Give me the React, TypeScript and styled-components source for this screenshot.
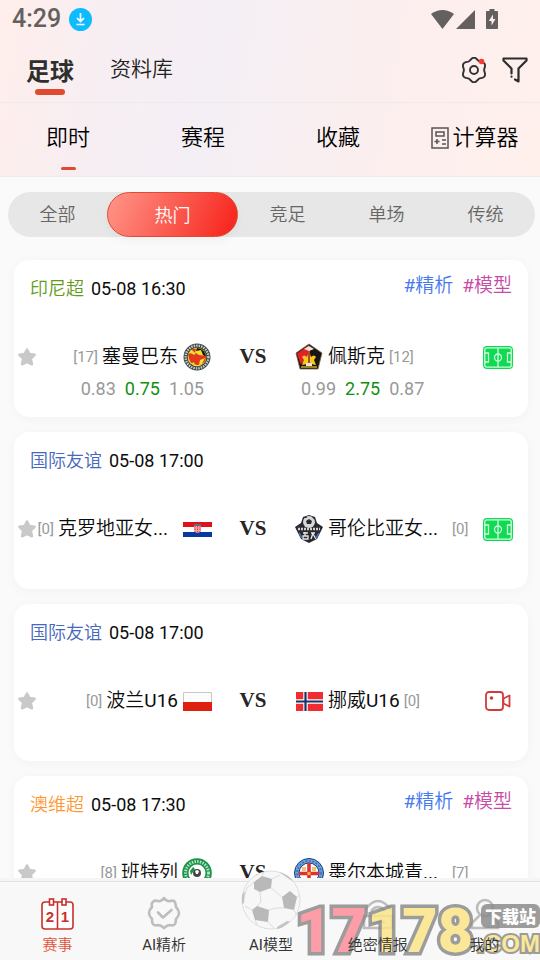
import React from "react";
import styled, { createGlobalStyle, css } from "styled-components";

const Global = createGlobalStyle`
  * { box-sizing: border-box; }
  body {
    margin: 0;
    background: #fafafa;
    color: #0c0c0c;
    font-family: Roboto, "Noto Sans CJK SC DemiLight", "Noto Sans CJK SC Light", "Noto Sans CJK SC", sans-serif;
  }
  button {
    margin: 0;
    padding: 0;
    border: 0;
    background: none;
    color: inherit;
    font: inherit;
    cursor: pointer;
  }
  a { color: inherit; text-decoration: none; }
  svg { display: block; flex: none; }
`;

/* ---------- page frame ---------- */

const Screen = styled.div`
  display: flex;
  flex-direction: column;
  height: 100vh;
  overflow: hidden;
`;

const Header = styled.header`
  flex: none;
  background: linear-gradient(100deg, #ffeeeb 0%, #f6eef3 22%, #f4eff5 40%, #fbeeee 68%, #fff0ec 100%);
  border-bottom: 1px solid #ebebee;
`;

const StatusBar = styled.div`
  display: flex;
  align-items: center;
  justify-content: space-between;
  height: 38px;
  padding: 0 42px 0 12px;
  color: #646060;
`;

const StatusGroup = styled.div<{ $gap: number }>`
  display: flex;
  align-items: center;
  gap: ${(p) => p.$gap}px;
`;

const Clock = styled.time`
  font-size: 25px;
  font-weight: 500;
  line-height: 36px;
`;

const TitleBar = styled.div`
  display: flex;
  align-items: center;
  justify-content: space-between;
  height: 65px;
  padding: 0 12px 0 26px;
  border-bottom: 1px solid #ebebee;
`;

const TitleTabs = styled.div`
  display: flex;
  align-items: flex-start;
  gap: 36px;
  padding-top: 8px;
`;

const TitleTab = styled.button<{ $active?: boolean }>`
  display: flex;
  flex-direction: column;
  align-items: center;
  gap: 2px;
  font-size: 21px;
  line-height: 30px;
  color: #222;
  ${(p) =>
    p.$active &&
    css`
      padding-top: 3px;
      font-family: Roboto, "Noto Sans CJK SC", sans-serif;
      font-size: 24px;
      font-weight: 700;
      color: #2f2f2f;
    `}
`;

const Underline = styled.span<{ $w: number; $h: number }>`
  width: ${(p) => p.$w}px;
  height: ${(p) => p.$h}px;
  border-radius: 3px;
  background: #df4a30;
`;

const Tools = styled.div`
  display: flex;
  align-items: center;
  gap: 15px;
`;

const ViewTabs = styled.nav`
  display: grid;
  grid-template-columns: repeat(4, 1fr);
  height: 73px;
`;

const ViewTab = styled.button`
  display: flex;
  flex-direction: column;
  align-items: center;
  padding: 19px 0 0 1px;
  gap: 13px;
  font-size: 22px;
  line-height: 32px;
  color: #000;
`;

const TabLabel = styled.span<{ $icon?: boolean }>`
  display: flex;
  align-items: center;
  gap: 3px;
  padding-left: ${(p) => (p.$icon ? "4px" : "0")};
`;

const Main = styled.main`
  flex: 1;
  min-height: 0;
  overflow-y: auto;
  scrollbar-width: none;
  padding-top: 15px;
`;

/* ---------- filter ---------- */

const Segments = styled.div`
  display: flex;
  height: 45px;
  margin: 0 5px 23px 8px;
  border-radius: 23px;
  background: #e7e7e7;
`;

const Segment = styled.button<{ $active?: boolean }>`
  flex: 99 1 0;
  padding-bottom: 3px;
  font-size: 18px;
  color: #666;
  ${(p) =>
    p.$active &&
    css`
      flex-grow: 129;
      padding-bottom: 2px;
      border: 1px solid #de4b33;
      border-radius: 23px;
      color: #fff;
      background: linear-gradient(115deg, #ff9184 5%, #f72a22 92%);
      box-shadow: 0 4px 10px rgba(0, 0, 0, 0.04);
    `}
`;

/* ---------- match cards ---------- */

const CardList = styled.div`
  display: flex;
  flex-direction: column;
  gap: 15px;
  padding: 0 12px 15px 14px;
`;

const Card = styled.article`
  padding: 16px 15px 16px 4px;
  border-radius: 15px;
  background: #fff;
  box-shadow: 0 2px 12px rgba(0, 0, 0, 0.035);
`;

const CardHead = styled.div`
  display: flex;
  align-items: flex-start;
  justify-content: space-between;
  height: 65px;
  padding-left: 12px;
  font-size: 18px;
  line-height: 26px;
`;

const Fixture = styled.div`
  display: flex;
  gap: 7px;
`;

const League = styled.span<{ $color: string }>`
  color: ${(p) => p.$color};
`;

const Tags = styled.div`
  display: flex;
  gap: 9px;
  padding-right: 1px;
  font-size: 19px;
  line-height: 20px;
`;

const Tag = styled.a<{ $color: string }>`
  color: ${(p) => p.$color};
`;

const Board = styled.div`
  display: grid;
  grid-template-columns: 19px minmax(0, 1fr) 82px minmax(0, 1fr) 44px;
  grid-template-rows: 32px 24px;
  row-gap: 4px;
  align-items: center;
`;

const Team = styled.div<{ $home?: boolean }>`
  display: flex;
  align-items: center;
  justify-content: ${(p) => (p.$home ? "flex-end" : "flex-start")};
  gap: 4px;
`;

const TeamName = styled.span<{ $wide?: boolean }>`
  font-size: 19px;
  line-height: 30px;
  white-space: nowrap;
  min-width: ${(p) => (p.$wide ? "120px" : "0")};
`;

const Crest = styled.span`
  display: flex;
  justify-content: center;
  width: 30px;
`;

const Rank = styled.span`
  font-size: 15px;
  line-height: 30px;
  color: #999;
`;

const Versus = styled.span`
  text-align: center;
  font-family: "Liberation Serif", serif;
  font-size: 21px;
  font-weight: 700;
  line-height: 24px;
  padding-bottom: 2px;
  color: #262626;
`;

const StarButton = styled.button`
  display: flex;
  justify-content: flex-start;
`;

const MediaButton = styled.button`
  display: flex;
  justify-content: flex-end;
`;

const Odds = styled.div<{ $home?: boolean }>`
  grid-row: 2;
  grid-column: ${(p) => (p.$home ? 2 : 4)};
  display: flex;
  justify-content: ${(p) => (p.$home ? "flex-end" : "flex-start")};
  gap: 9px;
  padding: ${(p) => (p.$home ? "0 8px 0 0" : "0 0 0 7px")};
  font-size: 18px;
  line-height: 24px;
  color: #999;
`;

const Line = styled.span`
  color: #109010;
`;

/* ---------- bottom bar ---------- */

const BottomBar = styled.nav`
  position: relative;
  flex: none;
  padding-top: 3px;
  background: #f5f5f5;
`;

const BottomItems = styled.div`
  display: grid;
  grid-template-columns: repeat(5, 1fr);
  height: 79px;
  padding: 0 2px 0 4px;
  border-top: 1px solid #e2e2e2;
  background: #f8f8f8;
`;

const BottomItem = styled.a<{ $active?: boolean }>`
  display: flex;
  flex-direction: column;
  align-items: center;
  justify-content: flex-end;
  padding-bottom: 5px;
  font-size: 15px;
  line-height: 20px;
  color: ${(p) => (p.$active ? "#e0523a" : "#333")};
`;

const ItemLabel = styled.span`
  position: relative;
  z-index: 2;
`;

const ItemIcon = styled.span`
  display: flex;
  flex-direction: column;
  justify-content: flex-end;
  height: 36px;
  margin-bottom: 5px;
`;

const Brand = styled.div`
  position: absolute;
  right: 0;
  bottom: 0;
  z-index: 1;
  display: flex;
  align-items: flex-end;
  opacity: 0.85;
  font-family: Roboto, sans-serif;
  font-weight: 900;
  -webkit-text-stroke: 7px #8c8c8c;
  paint-order: stroke fill;
  color: #fbe688;
`;

const BrandNumber = styled.span`
  font-size: 61px;
  line-height: 58px;
`;

const BrandRed = styled.span`
  color: #fd8e99;
`;

const BrandSide = styled.span`
  display: flex;
  flex-direction: column;
  align-items: flex-end;
  width: 67px;
`;

const BrandBadge = styled.span`
  padding: 0 4px;
  border-radius: 6px;
  background: #8c8c8c;
  color: #fff;
  font-family: "Noto Sans CJK SC", sans-serif;
  font-size: 17px;
  line-height: 24px;
  -webkit-text-stroke: 0;
`;

const BrandDomain = styled.span`
  font-family: "Liberation Sans", sans-serif;
  font-size: 24px;
  line-height: 32px;
  -webkit-text-stroke: 4px #8c8c8c;
`;

/* ---------- icons ---------- */

const DownloadIcon = () => (
  <svg width="23" height="23" viewBox="0 0 23 23">
    <circle cx="11.500" cy="11.500" r="11.500" fill="#0cbcff" />
    <path d="M11.500 5v8M8 10l3.500 3.500L15 10M7.500 16.500h8" fill="none" stroke="#fff" strokeWidth="1.700" />
  </svg>
);

const WifiIcon = () => (
  <svg width="23" height="19" viewBox="0 0 23 19">
    <path d="M0 4Q11.500-4 23 4L11.500 19Z" fill="currentColor" />
  </svg>
);

const SignalIcon = () => (
  <svg width="19" height="19" viewBox="0 0 19 19">
    <path d="M19 0v19H0Z" fill="currentColor" />
  </svg>
);

const BatteryIcon = () => (
  <svg width="12" height="20" viewBox="0 0 12 20">
    <path d="M3.500 0h5v2H11q1 0 1 1v16q0 1-1 1H1q-1 0-1-1V3q0-1 1-1h2.500Z" fill="currentColor" />
    <path d="M7 5.500 2.800 12H5.500v4.500L9.500 10H7Z" fill="#fceeee" />
  </svg>
);

const gearOutline = Array.from({ length: 72 }, (_, i) => {
  const a = (i * Math.PI) / 36;
  const r = 11.2 + 1.1 * Math.cos(6 * a);
  return `${i ? "L" : "M"}${(13 + r * Math.sin(a)).toFixed(2)} ${(13 - r * Math.cos(a)).toFixed(2)}`;
}).join("") + "Z";

const GearIcon = () => (
  <svg width="26" height="26" viewBox="0 0 26 26" fill="none" stroke="#333" strokeWidth="1.900">
    <path d={gearOutline} strokeLinejoin="round" />
    <circle cx="13" cy="13" r="4" />
    <circle cx="20.500" cy="4.500" r="2.800" fill="#fb3a30" stroke="none" />
  </svg>
);

const FilterIcon = () => (
  <svg width="26" height="26" viewBox="0 0 26 26" fill="none" stroke="#2c2c2c" strokeWidth="2.200" strokeLinejoin="round" strokeLinecap="round">
    <path d="M9.500 16.500V11.500L1.500 3.500V1.500H24.500V3.500L16.500 11.500V24.500L13 22.500" />
    <path d="M9.500 19.500v.2" />
  </svg>
);

const CalculatorIcon = () => (
  <svg width="18" height="22" viewBox="0 0 18 22" fill="none" stroke="#555" strokeWidth="1.500">
    <rect x="1" y="1" width="16" height="20" />
    <path d="M5 5h8v4H5ZM3.500 14.500h5M6 12v5M11 13h4M11 17h4" />
  </svg>
);

const StarIcon = () => (
  <svg width="18" height="18" viewBox="0 0 18 18">
    <path
      d="M9 1.500 11.300 6.100 16.500 6.800 12.800 10.700 13.900 16.200 9 13.900 4.100 16.200 5.200 10.700 1.500 6.800 6.700 6.100Z"
      fill="#c9c9c9"
      stroke="#c9c9c9"
      strokeWidth="2.600"
      strokeLinejoin="round"
    />
  </svg>
);

const PitchIcon = () => (
  <svg width="30" height="23" viewBox="0 0 30 23">
    <rect width="30" height="23" rx="4" fill="#0edb52" />
    <g fill="none" stroke="#d4fadf" strokeWidth="1.300">
      <rect x="1.800" y="1.800" width="26.400" height="19.400" rx="2" />
      <path d="M15 2v19M2 7h3.500v9H2M28 7h-3.500v9h3.500" />
      <circle cx="15" cy="11.500" r="3.500" />
    </g>
  </svg>
);

const VideoIcon = () => (
  <svg width="28" height="20" viewBox="0 0 28 20" fill="none" stroke="#d23a3c" strokeWidth="1.800">
    <rect x="1" y="1" width="17" height="18" rx="3" />
    <path d="M18.500 7.500 24.500 4.500V15.500L18.500 12.500Z" strokeLinejoin="round" />
    <circle cx="6.500" cy="7" r="1.800" fill="#d23a3c" stroke="none" />
  </svg>
);

const PadangCrest = () => (
  <svg width="28" height="28" viewBox="0 0 28 28">
    <circle cx="14" cy="14" r="13.500" fill="#3a4642" />
    <circle cx="14" cy="14" r="11.400" fill="none" stroke="#c6cbc8" strokeWidth="2.400" strokeDasharray="1.500 1" />
    <circle cx="14" cy="14" r="9.300" fill="#f2df30" />
    <path d="M14 5a9 9 0 0 1 9 9l-3-2-2-5-5 1Z" fill="#15120c" />
    <path d="M5 11q3-2 6 1l2-2 3 2 7 1q0 6-4 8-5 2-9 0-4-2-5-10Z" fill="#e2381f" />
    <path d="M8 6l4 4 1-4Z" fill="#e2381f" />
    <path d="M17 17l5-2-3 6-3 1ZM10 19l3 3-4-1Z" fill="#f2df30" />
  </svg>
);

const PersikCrest = () => (
  <svg width="28" height="28" viewBox="0 0 28 28">
    <path d="M14 1 27 10 23 26H5L1 10Z" fill="#1a1514" stroke="#776a3c" strokeWidth=".8" />
    <path d="M14 2 2 10.500 5.500 21 14 18Z" fill="#e3202a" />
    <path d="M7 14q2-3 5 0L14 8l2 6q3-3 5 0l-2 3 2 5-5-1h-4l-5 1 2-5Z" fill="#f5c91c" />
    <path d="M13 5h2v15h-2Z" fill="#b24b22" />
    <path d="M9 6 14 3 19 6 14 8Z" fill="#efe7e0" />
    <path d="M6 23h16v2H6Z" fill="#9a8520" />
    <path d="M11 20h6v3h-6Z" fill="#ece5df" />
  </svg>
);

const CroatiaFlag = () => (
  <svg width="29" height="15" viewBox="0 0 29 15">
    <path d="M0 0h29v5H0Z" fill="#dc1419" />
    <path d="M0 5h29v5H0Z" fill="#fff" />
    <path d="M0 10h29v5H0Z" fill="#073a9f" />
    <path d="M11 4h7v5q-3.500 4-7 0Z" fill="#f4a3a5" />
    <path d="M12 4v6M14.500 4v7M17 4v6" stroke="#e23b45" strokeDasharray="1.500 1" />
    <path d="M11 3h7" stroke="#4284a9" strokeWidth="1.500" />
  </svg>
);

const GuestCrest = () => (
  <svg width="28" height="28" viewBox="0 0 28 28">
    <path d="M14 0 20 2 22 8 28 12 25 18 22 24 14 28 6 24 3 18 0 12 6 8 8 2Z" fill="#292a31" />
    <circle cx="14" cy="7" r="6" fill="#d9d6d5" />
    <path d="m14 4 3 2-1 3h-4l-1-3ZM9 3l2-2 1 2ZM17 2l2 0 1 3Z" fill="#292a31" />
    <path d="M3 14h22" stroke="#d7cdca" strokeWidth="2.500" strokeDasharray="2 1" />
    <path d="M8 18h5M8 21h5v3H8ZM10 17v4M16 18h4M18 18l-2 6M18 19l3 5" fill="none" stroke="#ebe8e8" strokeWidth="1.300" />
    <path d="M4 18l3 5M24 18l-3 5" stroke="#3e6db4" strokeWidth="1.600" />
  </svg>
);

const PolandFlag = () => (
  <svg width="29" height="19" viewBox="0 0 29 19">
    <path d="M.5.5h28v18H.5Z" fill="#fcfcfc" stroke="#c8c8c8" />
    <path d="M0 10h29v9H0Z" fill="#df1f10" />
  </svg>
);

const NorwayFlag = () => (
  <svg width="27" height="19" viewBox="0 0 27 19">
    <path d="M0 0h27v19H0Z" fill="#f02c31" />
    <path d="M9.500 0v19M0 9.500h27" stroke="#fff" strokeWidth="4.500" />
    <path d="M9.500 0v19M0 9.500h27" stroke="#123469" strokeWidth="2.200" />
  </svg>
);

const BentleighCrest = () => (
  <svg width="30" height="30" viewBox="0 0 30 30">
    <circle cx="15" cy="15" r="14.800" fill="#189447" />
    <circle cx="15" cy="15" r="11.500" fill="none" stroke="#b8dec6" strokeWidth="3" strokeDasharray="1.500 1.200" />
    <circle cx="15" cy="15" r="8.500" fill="#fff" />
    <circle cx="15" cy="15" r="4" fill="#444" />
    <path d="M13 13l2-1 2 1-1 3h-2Z" fill="#fff" />
    <path d="M8 13 11 9 13 11 9 17Z" fill="#189447" />
  </svg>
);

const MelbourneCrest = () => (
  <svg width="30" height="30" viewBox="0 0 30 30">
    <circle cx="15" cy="15" r="14.500" fill="#6ea4dd" stroke="#173b7a" />
    <circle cx="15" cy="15" r="12" fill="none" stroke="#3d6bab" strokeWidth="1.500" strokeDasharray="2 1.500" />
    <circle cx="15" cy="15" r="10" fill="#fff" stroke="#173b7a" />
    <path d="M15 5v20M5 15.500h20" stroke="#e13030" strokeWidth="3.600" />
    <path d="M8 9h4v4H8ZM18 9h4v4h-4Z" fill="#efc278" />
    <circle cx="15" cy="15.500" r="1.800" fill="#f8ba36" />
  </svg>
);

const ScoreIcon = () => (
  <svg width="33" height="32" viewBox="0 0 33 32" fill="none" stroke="#c7302c" strokeWidth="1.600">
    <rect x="1" y="4" width="31" height="27" rx="3" fill="#fff" />
    <path d="M16.500 4v27" />
    <rect x="8.500" y="1" width="4" height="6" fill="#fff" />
    <rect x="21" y="1" width="4" height="6" fill="#fff" />
    <g fill="#c7302c" stroke="none" fontFamily="Liberation Sans, sans-serif" fontSize="15" fontWeight="700" textAnchor="middle">
      <text x="9" y="24">2</text>
      <text x="24" y="24">1</text>
    </g>
  </svg>
);

const VerifiedIcon = () => (
  <svg width="34" height="34" viewBox="0 0 34 34" fill="none" stroke="#bdbdbd" strokeWidth="2.600" strokeLinejoin="round">
    <path d="M17 2Q20 6 23 5 27 4 28 6 29 10 29 11 32 14 32 17 32 20 29 23 29 26 28 28 27 30 23 29 20 29 17 32 14 29 11 29 7 30 6 28 5 27 5 23 2 20 2 17 2 14 5 11 4 7 6 6 7 4 11 5 14 6 17 2Z" />
    <path d="m11 16.500 5 5L24.500 14" strokeLinecap="round" />
  </svg>
);

const BallIcon = () => (
  <svg width="60" height="60" viewBox="0 0 60 60">
    <circle cx="30" cy="30" r="29" fill="#f7f7f7" stroke="#dedede" />
    <g fill="none" stroke="#dcdcdc">
      <path d="M19 22 20 32 16 36M30 18 41 27M28 40 35 38 43 38M13 12 6 18 2 30M11 40 4 36M14 50 16 55M27 52 33 58M53 40 56 45M56 27 59 25M31 9 39 5M21 6 23 2" />
    </g>
    <path d="m13 12 8-6 10 3-1 9-11 4-6-3ZM41 27l8-6 7 6-3 13-10-2ZM11 40l5-4 12 4-1 12-13-2Z" fill="#b9b9b9" />
    <path d="M1 25 4 21 3 33 1 34ZM36 57 46 51 49 51Q43 58 36 59ZM38 2Q47 4 53 12L48 9Z" fill="#c4c4c4" />
  </svg>
);

const SecretIcon = () => (
  <svg width="32" height="32" viewBox="0 0 32 32" fill="none" stroke="#bdbdbd" strokeWidth="2.600">
    <path d="M3 12Q16-6 29 12M9 13q7-8 14 0M2 18h28v12H2ZM9 24h14" />
  </svg>
);

const PersonIcon = () => (
  <svg width="32" height="32" viewBox="0 0 32 32" fill="none" stroke="#bdbdbd" strokeWidth="2.600">
    <circle cx="16" cy="10" r="8" />
    <path d="M11 17 3 25v5h26v-5l-8-8" />
  </svg>
);

/* ---------- data ---------- */

type Side = { name: string; rank: string; crest: React.ReactNode; wide?: boolean; odds?: [string, string, string] };
type Match = {
  league: string;
  color: string;
  time: string;
  tagged?: boolean;
  home: Side;
  away: Side;
  media?: "pitch" | "video";
};

const matches: Match[] = [
  {
    league: "印尼超",
    color: "#649b16",
    time: "05-08 16:30",
    tagged: true,
    home: { name: "塞曼巴东", rank: "[17]", crest: <PadangCrest />, odds: ["0.83", "0.75", "1.05"] },
    away: { name: "佩斯克", rank: "[12]", crest: <PersikCrest />, odds: ["0.99", "2.75", "0.87"] },
    media: "pitch",
  },
  {
    league: "国际友谊",
    color: "#4668bd",
    time: "05-08 17:00",
    home: { name: "克罗地亚女...", rank: "[0]", crest: <CroatiaFlag />, wide: true },
    away: { name: "哥伦比亚女...", rank: "[0]", crest: <GuestCrest />, wide: true },
    media: "pitch",
  },
  {
    league: "国际友谊",
    color: "#4668bd",
    time: "05-08 17:00",
    home: { name: "波兰U16", rank: "[0]", crest: <PolandFlag /> },
    away: { name: "挪威U16", rank: "[0]", crest: <NorwayFlag /> },
    media: "video",
  },
  {
    league: "澳维超",
    color: "#ff9833",
    time: "05-08 17:30",
    tagged: true,
    home: { name: "班特列", rank: "[8]", crest: <BentleighCrest /> },
    away: { name: "墨尔本城青...", rank: "[7]", crest: <MelbourneCrest />, wide: true },
  },
];

const OddsRow = ({ odds, home }: { odds: [string, string, string]; home?: boolean }) => (
  <Odds $home={home}>
    <span>{odds[0]}</span>
    <Line>{odds[1]}</Line>
    <span>{odds[2]}</span>
  </Odds>
);

const MatchCard = ({ match }: { match: Match }) => (
  <Card>
    <CardHead>
      <Fixture>
        <League $color={match.color}>{match.league}</League>
        <time>{match.time}</time>
      </Fixture>
      {match.tagged && (
        <Tags>
          <Tag href="#analysis" $color="#4678f0">#精析</Tag>
          <Tag href="#model" $color="#c74aa5">#模型</Tag>
        </Tags>
      )}
    </CardHead>
    <Board>
      <StarButton aria-label="收藏比赛">
        <StarIcon />
      </StarButton>
      <Team $home>
        <Rank>{match.home.rank}</Rank>
        <TeamName $wide={match.home.wide}>{match.home.name}</TeamName>
        <Crest>{match.home.crest}</Crest>
      </Team>
      <Versus>VS</Versus>
      <Team>
        <Crest>{match.away.crest}</Crest>
        <TeamName $wide={match.away.wide}>{match.away.name}</TeamName>
        <Rank>{match.away.rank}</Rank>
      </Team>
      {match.media && (
        <MediaButton aria-label={match.media === "video" ? "视频直播" : "动画直播"}>
          {match.media === "video" ? <VideoIcon /> : <PitchIcon />}
        </MediaButton>
      )}
      {match.home.odds && <OddsRow home odds={match.home.odds} />}
      {match.away.odds && <OddsRow odds={match.away.odds} />}
    </Board>
  </Card>
);

const filters = ["全部", "热门", "竞足", "单场", "传统"];

const bottomItems = [
  { href: "#matches", label: "赛事", icon: <ScoreIcon />, active: true },
  { href: "#analysis", label: "AI精析", icon: <VerifiedIcon /> },
  { href: "#model", label: "AI模型", icon: <BallIcon /> },
  { href: "#reports", label: "绝密情报", icon: <SecretIcon /> },
  { href: "#me", label: "我的", icon: <PersonIcon /> },
];

export default function App() {
  return (
    <Screen>
      <Global />
      <Header>
        <StatusBar>
          <StatusGroup $gap={8}>
            <Clock>4:29</Clock>
            <DownloadIcon />
          </StatusGroup>
          <StatusGroup $gap={2}>
            <WifiIcon />
            <StatusGroup $gap={11}>
              <SignalIcon />
              <BatteryIcon />
            </StatusGroup>
          </StatusGroup>
        </StatusBar>
        <TitleBar>
          <TitleTabs>
            <TitleTab $active>
              足球
              <Underline $w={30} $h={6} />
            </TitleTab>
            <TitleTab>资料库</TitleTab>
          </TitleTabs>
          <Tools>
            <button aria-label="设置">
              <GearIcon />
            </button>
            <button aria-label="筛选">
              <FilterIcon />
            </button>
          </Tools>
        </TitleBar>
        <ViewTabs>
          <ViewTab>
            <TabLabel>即时</TabLabel>
            <Underline $w={15} $h={3} />
          </ViewTab>
          <ViewTab>
            <TabLabel>赛程</TabLabel>
          </ViewTab>
          <ViewTab>
            <TabLabel>收藏</TabLabel>
          </ViewTab>
          <ViewTab>
            <TabLabel $icon>
              <CalculatorIcon />
              计算器
            </TabLabel>
          </ViewTab>
        </ViewTabs>
      </Header>

      <Main>
        <Segments>
          {filters.map((f, i) => (
            <Segment key={f} $active={i === 1}>
              {f}
            </Segment>
          ))}
        </Segments>
        <CardList>
          {matches.map((m, i) => (
            <MatchCard key={i} match={m} />
          ))}
        </CardList>
      </Main>

      <BottomBar>
        <BottomItems>
          {bottomItems.map((item) => (
            <BottomItem key={item.href} href={item.href} $active={item.active}>
              <ItemIcon>{item.icon}</ItemIcon>
              <ItemLabel>{item.label}</ItemLabel>
            </BottomItem>
          ))}
        </BottomItems>
        <Brand>
          <BrandNumber>
            <BrandRed>17</BrandRed>178
          </BrandNumber>
          <BrandSide>
            <BrandBadge>下载站</BrandBadge>
            <BrandDomain>.COM</BrandDomain>
          </BrandSide>
        </Brand>
      </BottomBar>
    </Screen>
  );
}
